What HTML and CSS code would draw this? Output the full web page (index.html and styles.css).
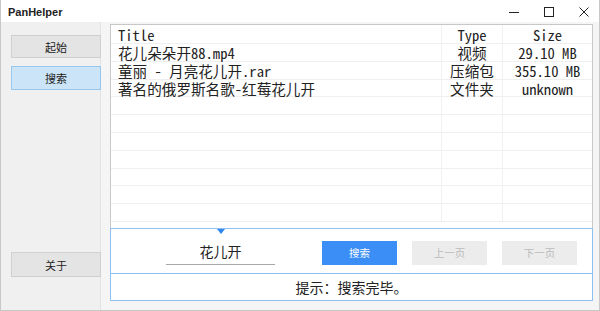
FILE: index.html
```html
<!DOCTYPE html>
<html lang="zh-CN">
<head>
  <meta charset="UTF-8">
  <title>PanHelper</title>
  <link rel="stylesheet" href="styles.css">
</head>
<body>
  <div class="window">
    <header class="titlebar">
      <span class="app-name">PanHelper</span>
      <div class="controls">
        <svg class="ctl" width="12" height="12" viewBox="0 0 12 12"><path d="M1 6.5h10" stroke="#222" stroke-width="1"/></svg>
        <svg class="ctl" width="12" height="12" viewBox="0 0 12 12"><rect x="1.5" y="1.5" width="9" height="9" fill="none" stroke="#222" stroke-width="1"/></svg>
        <svg class="ctl" width="12" height="12" viewBox="0 0 12 12"><path d="M1.5 1.5l9 9M10.5 1.5l-9 9" stroke="#222" stroke-width="1"/></svg>
      </div>
    </header>
    <div class="content">
      <nav class="sidebar">
        <button class="side-btn">起始</button>
        <button class="side-btn active">搜索</button>
        <button class="side-btn about">关于</button>
      </nav>
      <main class="main">
        <div class="grid">
          <div class="row head">
            <div class="cell c-title">Title</div>
            <div class="cell c-type">Type</div>
            <div class="cell c-size">Size</div>
          </div>
          <div class="row">
            <div class="cell c-title">花儿朵朵开88.mp4</div>
            <div class="cell c-type">视频</div>
            <div class="cell c-size">29.10 MB</div>
          </div>
          <div class="row">
            <div class="cell c-title">童丽 - 月亮花儿开.rar</div>
            <div class="cell c-type">压缩包</div>
            <div class="cell c-size">355.10 MB</div>
          </div>
          <div class="row">
            <div class="cell c-title">著名的俄罗斯名歌-红莓花儿开</div>
            <div class="cell c-type">文件夹</div>
            <div class="cell c-size">unknown</div>
          </div>
          <div class="row"><div class="cell c-title"></div><div class="cell c-type"></div><div class="cell c-size"></div></div>
          <div class="row"><div class="cell c-title"></div><div class="cell c-type"></div><div class="cell c-size"></div></div>
          <div class="row"><div class="cell c-title"></div><div class="cell c-type"></div><div class="cell c-size"></div></div>
          <div class="row"><div class="cell c-title"></div><div class="cell c-type"></div><div class="cell c-size"></div></div>
          <div class="row"><div class="cell c-title"></div><div class="cell c-type"></div><div class="cell c-size"></div></div>
          <div class="row"><div class="cell c-title"></div><div class="cell c-type"></div><div class="cell c-size"></div></div>
          <div class="row"><div class="cell c-title"></div><div class="cell c-type"></div><div class="cell c-size"></div></div>
        </div>
        <section class="panel">
          <span class="pointer"></span>
          <div class="search-bar">
            <div class="query">花儿开</div>
            <button class="btn primary">搜索</button>
            <button class="btn disabled">上一页</button>
            <button class="btn disabled">下一页</button>
          </div>
          <div class="status">提示：搜索完毕。</div>
        </section>
      </main>
    </div>
  </div>
</body>
</html>
```

FILE: styles.css
```css
* {
  box-sizing: border-box;
}
body {
  margin: 0;
  width: 600px;
  height: 311px;
  overflow: hidden;
  font-family: "Noto Sans CJK SC", "Noto Sans", sans-serif;
  color: #222;
}
.window {
  width: 600px;
  height: 311px;
  border: 1px solid #c8c8c8;
  border-top: none;
  display: flex;
  flex-direction: column;
  background: #f5f5f5;
}
.titlebar {
  height: 22px;
  background: #fff;
  display: flex;
  align-items: center;
  justify-content: space-between;
  padding-left: 7px;
}
.app-name {
  font-family: "Liberation Sans", Arial, sans-serif;
  font-weight: 700;
  font-size: 11px;
  margin-top: 2px;
}
.controls {
  display: flex;
  gap: 23px;
  padding-right: 9px;
  margin-top: 1px;
}
.ctl {
  display: block;
}
.content {
  flex: 1;
  display: flex;
}
.sidebar {
  width: 100px;
  background: #f0f0f0;
  border-right: 1px solid #e2e2e2;
  display: flex;
  flex-direction: column;
  padding: 13px 0 0 10px;
}
.side-btn {
  width: 90px;
  height: 23px;
  font-family: "Noto Sans CJK SC", sans-serif;
  font-size: 11px;
  color: #222;
  background: #e4e4e4;
  border: 1px solid #d0d0d0;
  padding: 0;
  margin-bottom: 8px;
}
.side-btn.active {
  height: 24px;
  background: #cce4f7;
  border-color: #99c8ef;
}
.side-btn.about {
  margin-top: auto;
  margin-bottom: 33px;
  height: 25px;
}
.main {
  flex: 1;
  padding: 2px 9px 9px 9px;
  display: flex;
  flex-direction: column;
}
.grid {
  height: 204px;
  background: #fff;
  border: 1px solid #c8c8c8;
  border-bottom: none;
  overflow: hidden;
  font-family: "Noto Sans Mono CJK SC", "Liberation Mono", "Noto Sans CJK SC", monospace;
  font-size: 14.6px;
  color: #222;
}
.row {
  display: flex;
  height: 17.8px;
  border-bottom: 1px solid #efefef;
  line-height: 17px;
}
.row.head {
  height: 19px;
  line-height: 19px;
}
.cell {
  white-space: nowrap;
}
.c-title {
  width: 331px;
  padding-left: 7px;
  border-right: 1px solid #f0f0f0;
}
.c-type {
  width: 61px;
  text-align: center;
  border-right: 1px solid #f0f0f0;
}
.c-size {
  flex: 1;
  text-align: center;
}
.panel {
  position: relative;
  flex: 1;
  background: #fff;
  border: 1px solid #8ec1f3;
  display: flex;
  flex-direction: column;
}
.pointer {
  position: absolute;
  left: 106px;
  top: 0;
  width: 0;
  height: 0;
  border-left: 4px solid transparent;
  border-right: 4px solid transparent;
  border-top: 5px solid #2f86f0;
}
.search-bar {
  height: 45px;
  border-bottom: 1px solid #8ec1f3;
  display: flex;
  align-items: center;
  padding-top: 3px;
}
.query {
  width: 109px;
  margin-left: 55px;
  margin-right: 47px;
  height: 25px;
  border-bottom: 1px solid #a8a8a8;
  text-align: center;
  font-size: 14px;
  line-height: 22px;
  color: #222;
}
.btn {
  width: 75px;
  height: 24px;
  margin-right: 15px;
  border: none;
  padding: 0;
  font-family: "Noto Sans CJK SC", sans-serif;
  font-size: 10.5px;
}
.btn.primary {
  background: #3a8ef6;
  color: #fff;
}
.btn.disabled {
  background: #ececec;
  color: #bcbcbc;
}
.status {
  flex: 1;
  display: flex;
  align-items: center;
  justify-content: center;
  font-size: 14px;
  color: #222;
}
```
